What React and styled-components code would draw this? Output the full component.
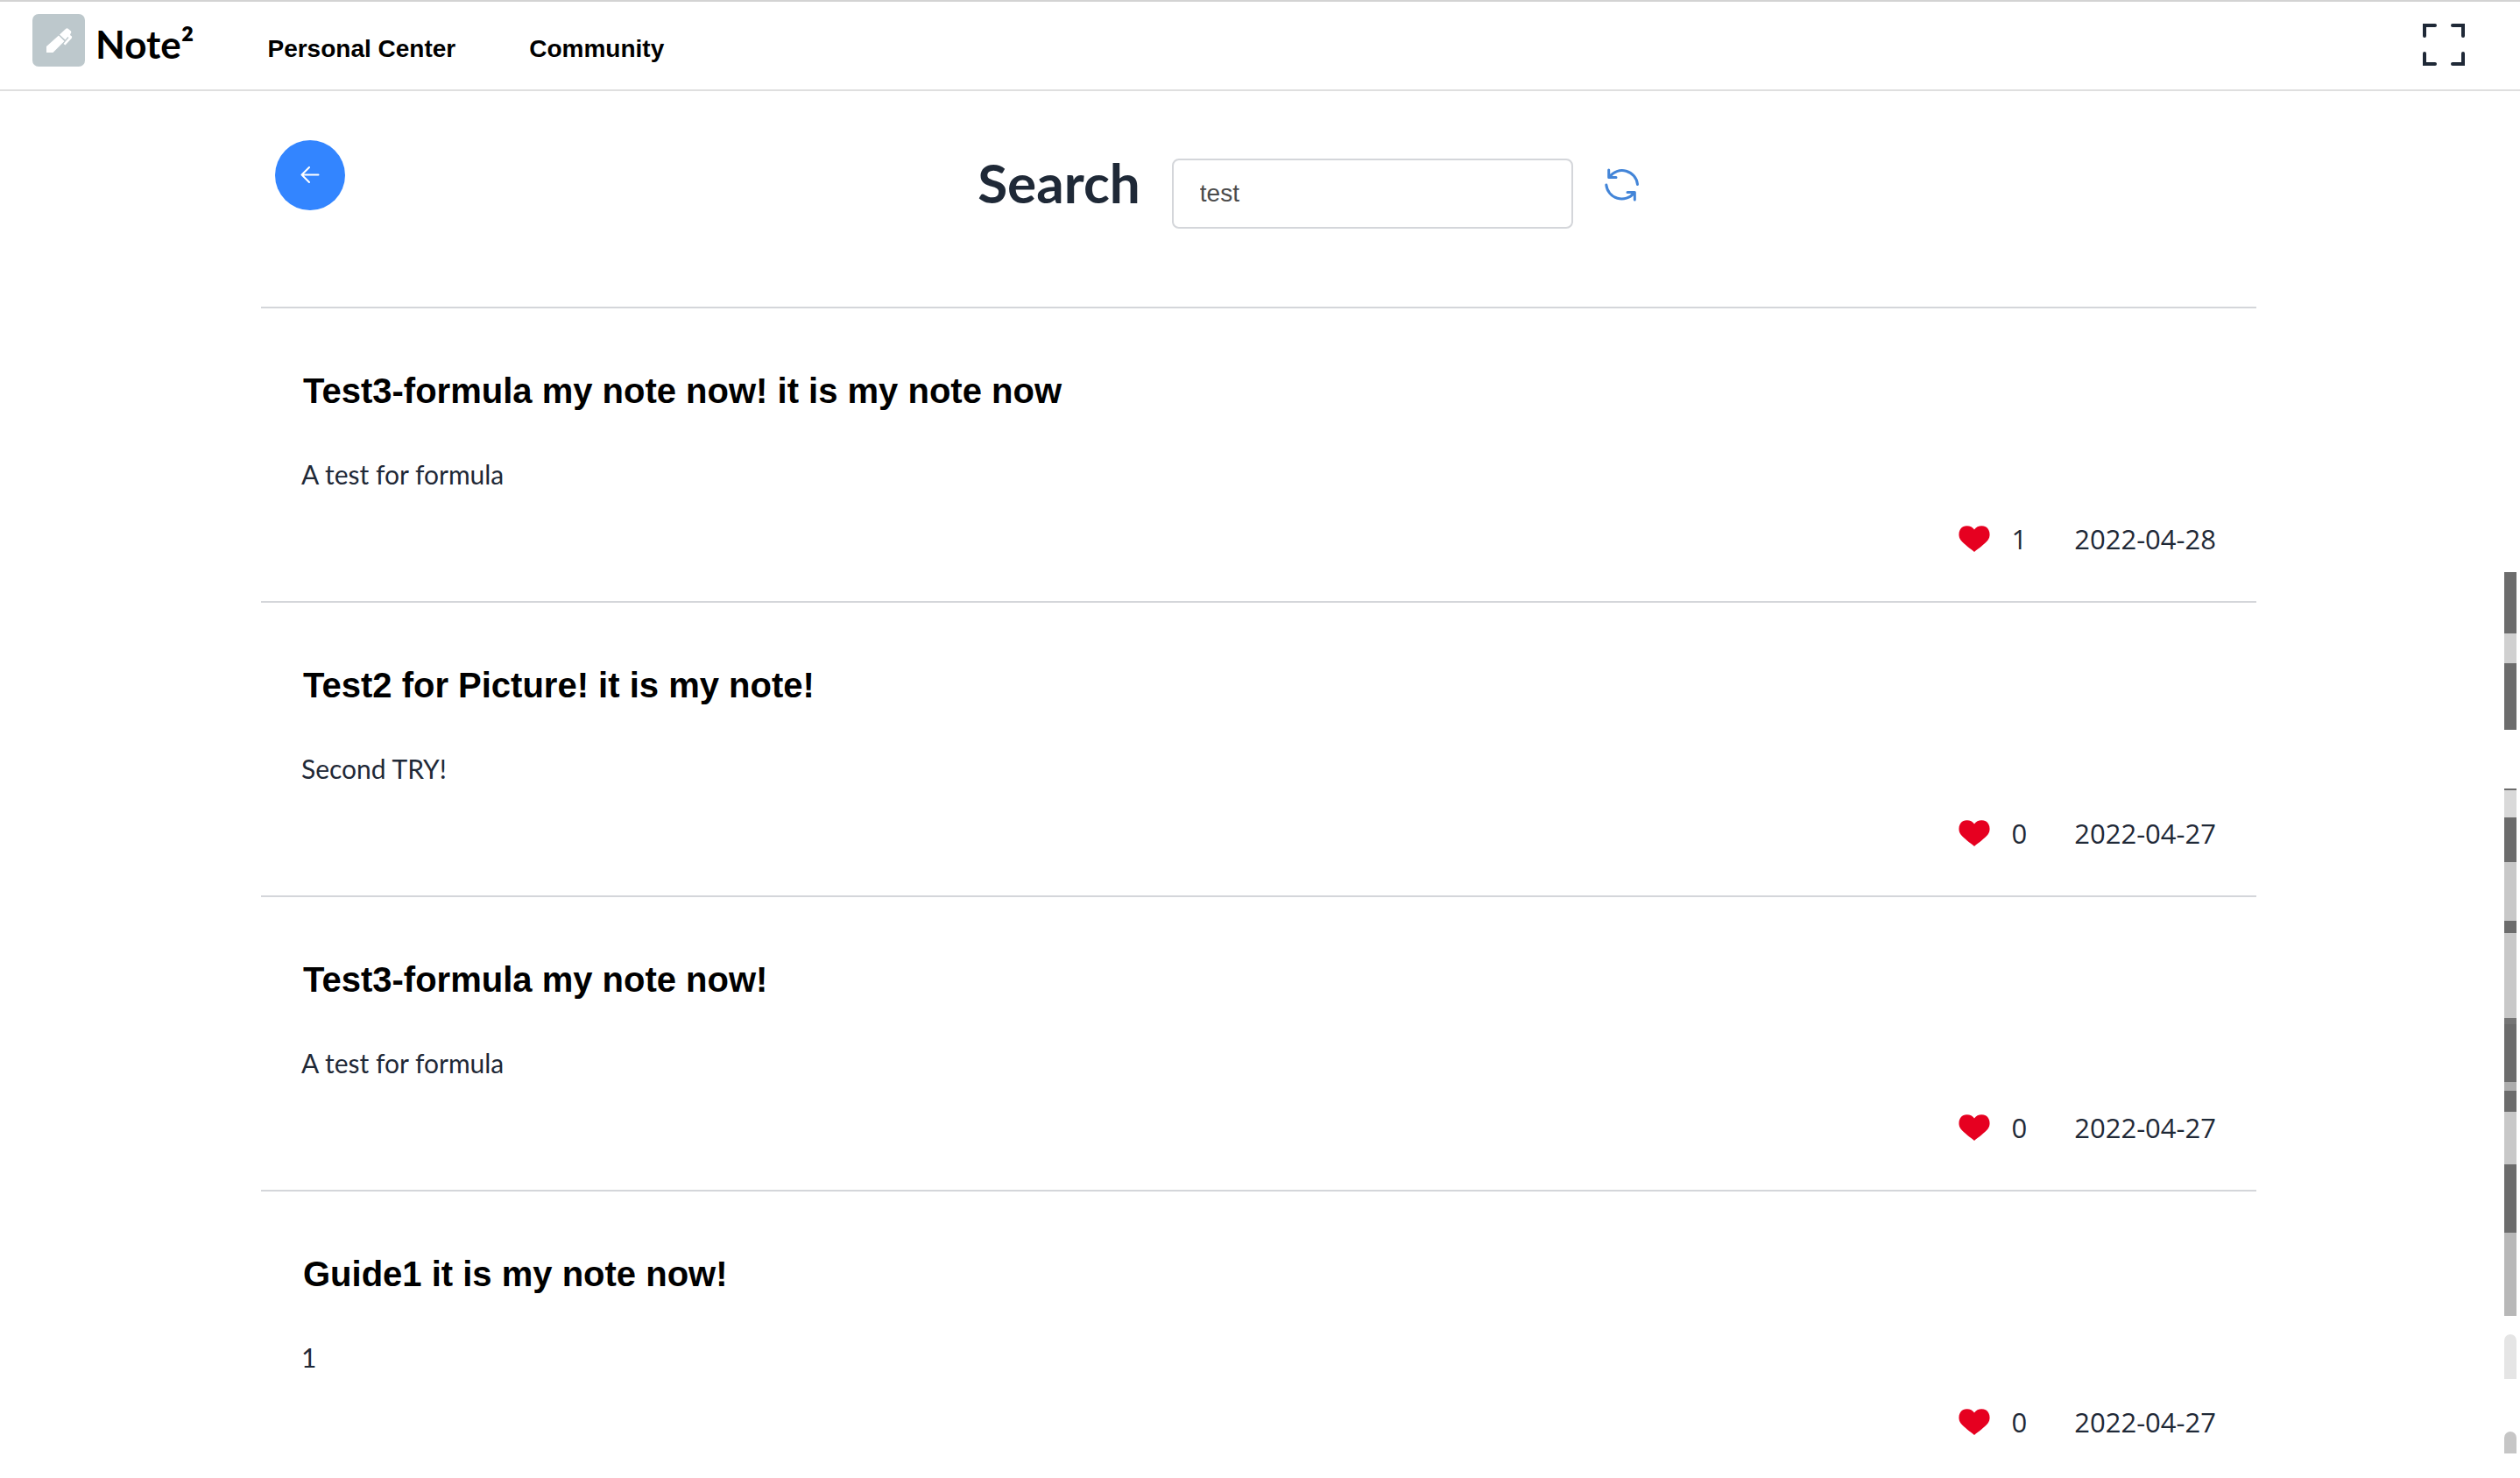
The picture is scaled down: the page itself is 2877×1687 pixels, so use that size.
import React, { useState } from "react";
import styled, { createGlobalStyle } from "styled-components";

const sans = `"Liberation Sans", Arial, sans-serif`;
const humanist = `Lato, "Open Sans", sans-serif`;
const numeric = `"Open Sans", "Noto Sans", sans-serif`;

const GlobalStyle = createGlobalStyle`
  *, *::before, *::after { box-sizing: border-box; }
  body { margin: 0; background: #fff; color: #1f2937; font-family: ${humanist}; }
  h1, h2, p, ul { margin: 0; padding: 0; }
  button { border: 0; padding: 0; background: none; cursor: pointer; }
  svg { display: block; }
`;

const Header = styled.header`
  display: flex;
  align-items: flex-start;
  height: 104px;
  padding: 14px 62px 0 37px;
  border-top: 2px solid #d3d3d3;
  border-bottom: 2px solid #dfdfdf;
`;

const Brand = styled.a`
  display: flex;
  gap: 12px;
  color: #000;
  text-decoration: none;
`;

const BrandMark = styled.span`
  width: 60px;
  height: 60px;
  border-radius: 7px;
  background: #bdc8cc;
`;

const BrandName = styled.span`
  padding-top: 9px;
  font-size: 44px;
  line-height: 50px;
  font-weight: 700;
`;

const Nav = styled.nav`
  display: flex;
  gap: 84px;
  margin-left: 84px;
  padding-top: 24px;
`;

const NavLink = styled.a`
  color: #000;
  font: 700 28px/32px ${sans};
  text-decoration: none;
`;

const FullscreenButton = styled.button`
  margin: 10px 0 0 auto;
  color: #1f2937;
`;

const Main = styled.main`
  padding: 56px 301px 0 298px;
`;

const Toolbar = styled.div`
  display: flex;
  align-items: flex-start;
  height: 190px;
  padding-left: 16px;
`;

const BackButton = styled.button`
  display: grid;
  place-items: center;
  width: 80px;
  height: 80px;
  border-radius: 50%;
  background: #3385ff;
  color: #fff;
`;

const SearchForm = styled.form`
  flex: 1;
  display: flex;
  justify-content: center;
  align-items: flex-start;
  padding-left: 36px;
`;

const SearchLabel = styled.label`
  padding-top: 12px;
  font-size: 62px;
  line-height: 72px;
  font-weight: 700;
`;

const SearchInput = styled.input`
  width: 458px;
  height: 80px;
  margin: 21px 18px 0 36px;
  padding: 0 30px;
  border: 2px solid #d4d6da;
  border-radius: 8px;
  background: #fff;
  color: #4b4b4b;
  font: 28px/32px ${sans};
  outline: none;
`;

const RefreshButton = styled.button`
  margin-top: 32px;
  padding: 0 18px;
  color: #4385d8;
`;

const NoteList = styled.ul`
  list-style: none;
`;

const NoteItem = styled.li`
  height: 336px;
  padding: 70px 46px 0;
  border-top: 2px solid #d4d6da;
  &:last-child { height: auto; }
`;

const NoteTitle = styled.h2`
  padding-left: 2px;
  color: #000;
  font: 700 40px/48px ${sans};
`;

const NoteText = styled.p`
  margin-top: 51px;
  font-size: 30px;
  line-height: 40px;
`;

const NoteMeta = styled.div`
  display: flex;
  justify-content: flex-end;
  align-items: center;
  margin-top: 34px;
  font: 400 31px/40px ${numeric};
`;

const LikeButton = styled.button`
  display: flex;
  align-items: center;
  gap: 25px;
  margin-right: 54px;
  color: inherit;
  font: inherit;
`;

const Minimap = styled.div`
  position: fixed;
  top: 0;
  right: 4px;
  width: 14px;
  padding-top: 653px;
  pointer-events: none;
`;

const Segment = styled.div`
  height: ${(p) => p.$size}px;
  background: ${(p) => p.$tone};
  border-radius: ${(p) => (p.$rounded ? "7px 7px 0 0" : "0")};
`;

const notes = [
  { title: "Test3-formula my note now! it is my note now", text: "A test for formula", likes: 1, date: "2022-04-28" },
  { title: "Test2 for Picture! it is my note!", text: "Second TRY!", likes: 0, date: "2022-04-27" },
  { title: "Test3-formula my note now!", text: "A test for formula", likes: 0, date: "2022-04-27" },
  { title: "Guide1 it is my note now!", text: "1", likes: 0, date: "2022-04-27" },
];

const segments = [
  [70, "#6c6c6c"], [34, "#d0d0d0"], [76, "#6c6c6c"], [67, "transparent"],
  [2, "#6c6c6c"], [31, "#d9d9d9"], [51, "#6c6c6c"], [67, "#c8c8c8"],
  [14, "#6c6c6c"], [97, "#c8c8c8"], [7, "#757575"], [66, "#6c6c6c"],
  [10, "#adadad"], [24, "#6c6c6c"], [60, "#c8c8c8"], [78, "#6c6c6c"],
  [95, "#b8b8b8"], [21, "transparent"], [51, "#e5e5e5", true],
  [60, "transparent"], [25, "#c6c6c6", true],
];

const PenIcon = () => (
  <svg width="60" height="60" viewBox="0 0 60 60" fill="#fff" aria-hidden="true">
    <path d="M16 44V37L30 24.500 36.500 31 23.500 44Z" />
    <path d="M31 23.500 38 17Q39.500 15.500 41 17L44 19.500Q45 21 43.500 22.500L43 24 45 25.500Q45.500 27 44.500 28L37.500 35.500 35.500 34 41.500 27 40.500 26 37.500 29.500Z" />
  </svg>
);

const FullscreenIcon = () => (
  <svg width="50" height="50" viewBox="0 0 50 50" fill="none" stroke="currentColor" strokeWidth="4" strokeLinecap="round" aria-hidden="true">
    <path d="M15 3H3V15M35 3H47V15M15 47H3V35M35 47H47V35" />
  </svg>
);

const ArrowIcon = () => (
  <svg width="22" height="20" viewBox="0 0 22 20" fill="none" stroke="currentColor" strokeWidth="2" strokeLinecap="round" strokeLinejoin="round" aria-hidden="true">
    <path d="M20.500 9.500H1.500M10 1 1.500 9.500 10 18" />
  </svg>
);

const RefreshIcon = () => (
  <svg width="40" height="38" viewBox="0 0 40 38" fill="none" stroke="currentColor" strokeWidth="3" strokeLinecap="round" strokeLinejoin="round" aria-hidden="true">
    <path d="M37.500 18.500A17.800 17.800 0 0 0 5.500 9.800M4.700 2V10.500H13" />
    <path d="M1.800 19A17.800 17.800 0 0 0 33.500 28.200M34.300 36V27.500H26" />
  </svg>
);

const HeartIcon = () => (
  <svg width="36" height="30" viewBox="0 0 36 30" fill="#e60020" aria-hidden="true">
    <path d="M18 30C14 26.500 6 21 2.500 16.500C-1 12 0 4 5 1.300C9.500-1 15.500.500 18 4.500C20.500.500 26.500-1 31 1.300C36 4 37 12 33.500 16.500C30 21 22 26.500 18 30Z" />
  </svg>
);

export default function App() {
  const [query, setQuery] = useState("test");
  return (
    <>
      <GlobalStyle />
      <Header>
        <Brand href="#">
          <BrandMark><PenIcon /></BrandMark>
          <BrandName>Note²</BrandName>
        </Brand>
        <Nav>
          <NavLink href="#personal">Personal Center</NavLink>
          <NavLink href="#community">Community</NavLink>
        </Nav>
        <FullscreenButton type="button" aria-label="Fullscreen"><FullscreenIcon /></FullscreenButton>
      </Header>
      <Main>
        <Toolbar>
          <BackButton type="button" aria-label="Back"><ArrowIcon /></BackButton>
          <SearchForm onSubmit={(e) => e.preventDefault()}>
            <SearchLabel htmlFor="query">Search</SearchLabel>
            <SearchInput id="query" type="text" value={query} onChange={(e) => setQuery(e.target.value)} />
            <RefreshButton type="submit" aria-label="Refresh"><RefreshIcon /></RefreshButton>
          </SearchForm>
        </Toolbar>
        <NoteList>
          {notes.map((note, i) => (
            <NoteItem key={i}>
              <NoteTitle>{note.title}</NoteTitle>
              <NoteText>{note.text}</NoteText>
              <NoteMeta>
                <LikeButton type="button" aria-label={`Like, ${note.likes}`}>
                  <HeartIcon />
                  {note.likes}
                </LikeButton>
                <time dateTime={note.date}>{note.date}</time>
              </NoteMeta>
            </NoteItem>
          ))}
        </NoteList>
      </Main>
      <Minimap aria-hidden="true">
        {segments.map(([size, tone, rounded], i) => (
          <Segment key={i} $size={size} $tone={tone} $rounded={rounded} />
        ))}
      </Minimap>
    </>
  );
}
